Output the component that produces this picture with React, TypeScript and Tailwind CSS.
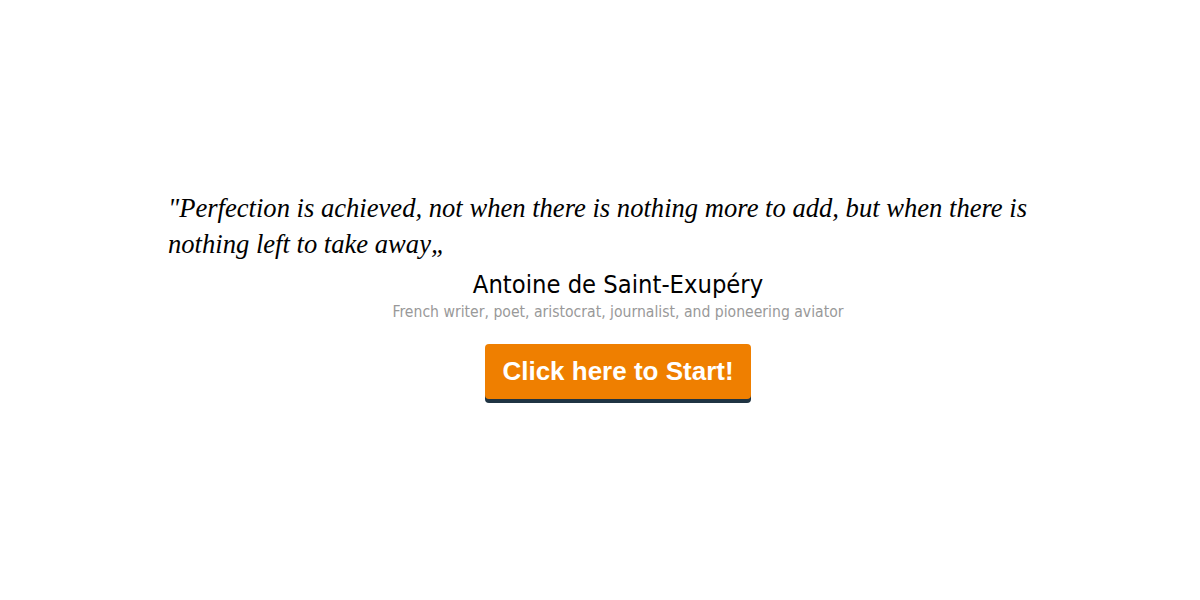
export default function App() {
  return (
    <div className="flex h-screen w-full items-center bg-white">
      <div className="mx-auto w-[936px] pb-[11px] pl-[36px]">
        <blockquote className="font-['Liberation_Serif',serif] text-[26.6px] italic leading-[36px] text-black">
          "Perfection is achieved, not when there is nothing more to add, but when there is nothing left to take away„
        </blockquote>
        <div className="mt-[6px] flex flex-col items-center">
          <h2 className="font-['DejaVu_Sans_Condensed','DejaVu_Sans',sans-serif] text-[25.3px] leading-[34px] text-black">
            Antoine de Saint-Exupéry
          </h2>
          <p className="font-['DejaVu_Sans_Condensed','DejaVu_Sans',sans-serif] text-[15.6px] leading-[21px] text-[#999999]">
            French writer, poet, aristocrat, journalist, and pioneering aviator
          </p>
          <button className="mt-[21px] rounded-[4px] bg-[#ef7f00] px-[17px] py-[10px] font-['Liberation_Sans',Arial,sans-serif] text-[26px] font-bold leading-[35px] text-white shadow-[0_4px_0_#1f3443]">
            Click here to Start!
          </button>
        </div>
      </div>
    </div>
  );
}
